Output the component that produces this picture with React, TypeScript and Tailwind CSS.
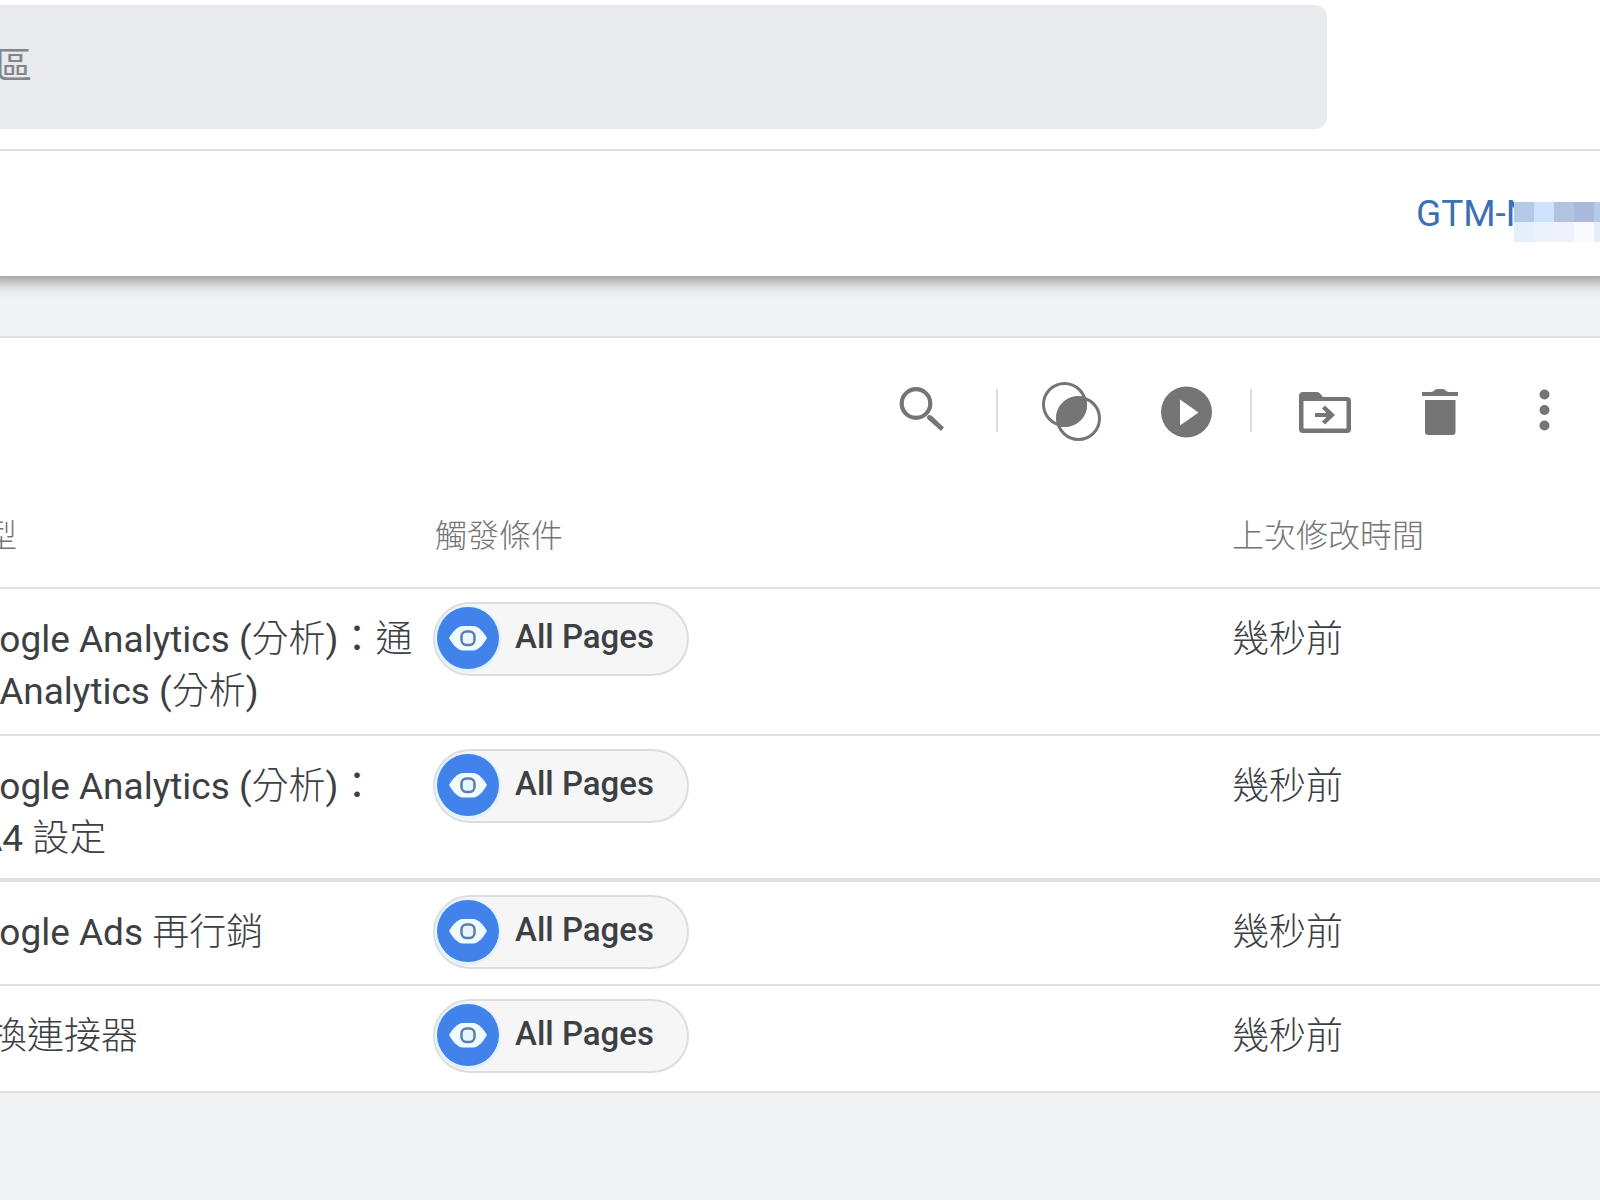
import type { ReactNode } from 'react';

import { clsx } from 'clsx';

type TagRow = {
  type: string;
  trigger: string;
  modified: string;
  height: string;
  border: string;
};

const rows: TagRow[] = [
  {
    type: 'Google Analytics (分析)：通用 Analytics (分析)',
    trigger: 'All Pages',
    modified: '幾秒前',
    height: 'h-[147px]',
    border: 'border-b-2',
  },
  {
    type: 'Google Analytics (分析)：GA4 設定',
    trigger: 'All Pages',
    modified: '幾秒前',
    height: 'h-[146px]',
    border: 'border-b-4',
  },
  { type: 'Google Ads 再行銷', trigger: 'All Pages', modified: '幾秒前', height: 'h-[104px]', border: 'border-b-2' },
  { type: '轉換連接器', trigger: 'All Pages', modified: '幾秒前', height: 'h-[107px]', border: 'border-b-2' },
];

export default function App() {
  return (
    <div className="min-h-screen overflow-hidden bg-[#f0f2f4] font-['Roboto','Noto_Sans_CJK_TC',sans-serif] text-[#3c4043]">
      <Header />
      <TagsCard />
    </div>
  );
}

const Header = () => {
  return (
    <header className="bg-white shadow-[0_-12px_16px_16px_rgba(0,0,0,0.45)]">
      <div className="border-b-2 border-[#e0e0e0] pt-[5px] pr-[273px] pb-5">
        <input
          type="text"
          aria-label="搜尋工作區"
          placeholder="搜尋工作區"
          className="-ml-[153px] block h-[124px] w-[calc(100%+153px)] rounded-xl bg-[#e8eaed] pb-0.5 text-[37px] outline-0 placeholder:text-[#80868b]"
        />
      </div>
      <div className="flex h-[125px] items-center justify-end">
        <a href="#container" className="relative w-[184px] text-[37px] leading-[52px] text-[#3b70b5]">
          GTM-N
          <MaskedId />
        </a>
      </div>
    </header>
  );
};

const MaskedId = () => {
  return (
    <span className="absolute top-1.5 left-[98px] grid w-[100px] grid-cols-5 bg-white pt-2">
      <span className="h-5 bg-[#b3cae9]" />
      <span className="h-5 bg-[#cfe2fb]" />
      <span className="h-5 bg-[#b2c3e0]" />
      <span className="h-5 bg-[#a9b9dc]" />
      <span className="h-5 bg-[#b5cbe8]" />
      <span className="h-5 bg-[#e4effb]" />
      <span className="h-5 bg-[#ecf2fb]" />
      <span className="h-5 bg-[#eff2fa]" />
      <span className="h-5 bg-[#f9fafe]" />
      <span className="h-5 bg-[#e6eefa]" />
    </span>
  );
};

const TagsCard = () => {
  return (
    <main className="mt-[60px] border-t-2 border-[#e0e0e0] bg-white">
      <Toolbar />
      <div className="-ml-[47px]">
        <table className="w-full table-fixed border-separate border-spacing-0 text-left">
          <colgroup>
            <col className="w-[482px]" />
            <col />
            <col className="w-[368px]" />
          </colgroup>
          <thead>
            <tr className="h-[149px] text-[32px] leading-10 text-[#757575]">
              <HeadCell>類型</HeadCell>
              <HeadCell>觸發條件</HeadCell>
              <HeadCell>上次修改時間</HeadCell>
            </tr>
          </thead>
          <tbody>
            {rows.map((row) => (
              <tr key={row.type} className={clsx('align-top text-[37px] leading-[52px]', row.height)}>
                <td className={clsx('border-[#e0e0e0] pt-[25px]', row.border)}>
                  <MixedText text={row.type} />
                </td>
                <td className={clsx('border-[#e0e0e0] pt-[13px]', row.border)}>
                  <TriggerChip name={row.trigger} />
                </td>
                <td className={clsx('border-[#e0e0e0] pt-[25px] font-light', row.border)}>{row.modified}</td>
              </tr>
            ))}
          </tbody>
        </table>
      </div>
    </main>
  );
};

// Chinese runs are set in the light weight, Latin runs in the regular one
const MixedText = ({ text }: { text: string }) => {
  return text.split(/([\u4e00-\u9fff]+)/).map((part, index) => (
    <span key={index} className={index % 2 ? 'font-light' : undefined}>
      {part}
    </span>
  ));
};

const HeadCell = ({ children }: { children: ReactNode }) => {
  return <th className="border-b-2 border-[#e0e0e0] pb-[31px] align-bottom font-light">{children}</th>;
};

const TriggerChip = ({ name }: { name: string }) => {
  return (
    <button className="-ml-0.5 flex h-[74px] w-[256px] items-center gap-3.5 rounded-full border-2 border-[#dcdddf] bg-[#f6f6f7]">
      <svg viewBox="0 0 66 66" className="size-[66px] shrink-0 overflow-visible">
        <circle cx="33" cy="33" r="33.500" fill="#e3f3fe" />
        <circle cx="33" cy="32" r="31" fill="#4182eb" />
        <path d="M14 32C17 27 22 20 28 20H38C44 20 49 27 52 32C49 37 44 44.500 38 44.500H28C22 44.500 17 37 14 32Z" fill="#effbff" />
        <rect x="26.500" y="25.500" width="13" height="13.500" rx="5" fill="#e8f6ff" stroke="#5c7fa6" strokeWidth="2.500" />
      </svg>
      <span className="pb-1 text-[33px] leading-10 font-medium">{name}</span>
    </button>
  );
};

const ToolButton = ({ label, className, children }: { label: string; className?: string; children: ReactNode }) => {
  return (
    <button aria-label={label} className={className}>
      <svg viewBox="0 0 60 60" className="size-[60px] overflow-visible" fill="#757575">
        {children}
      </svg>
    </button>
  );
};

const Toolbar = () => {
  return (
    <div className="flex items-center justify-end pt-[42px] pr-[26px]">
      <ToolButton label="搜尋">
        <circle cx="24" cy="23.500" r="14.300" fill="none" stroke="#757575" strokeWidth="4.200" />
        <path d="M34.500 37.500l2-2.500 3 .5 12.500 12-3 3.500L36 39.500z" />
      </ToolButton>
      <span className="mx-11 h-[43px] w-0.5 bg-[#dedede]" />
      <ToolButton label="比較">
        <circle cx="22.500" cy="24.500" r="21" fill="none" stroke="#757575" strokeWidth="3" />
        <circle cx="36.500" cy="38.500" r="21" fill="none" stroke="#757575" strokeWidth="3" />
        <path d="M44 17.700A22 22 0 0 1 15.300 45.300A22 22 0 0 1 44 17.700Z" />
      </ToolButton>
      <ToolButton label="啟用" className="ml-[55px]">
        <path fillRule="evenodd" d="M29.500 6.500a25.500 25.500 0 1 1 0 51a25.500 25.500 0 1 1 0-51ZM23 19.500v26L41.500 32.500Z" />
      </ToolButton>
      <span className="mr-[43px] ml-[33px] h-[43px] w-0.5 bg-[#dedede]" />
      <ToolButton label="移至資料夾">
        <path
          fillRule="evenodd"
          d="M8 12h14q2 0 3.500 2l2.500 3h24q4 0 4 4v28q0 4-4 4H8q-4 0-4-4V16q0-4 4-4ZM8.500 21v27.500h43V21Z"
        />
        <path d="M20 33h11.500l-4.500-4.500 3-3L40 35 30 44.500 27 41.500l4.500-4.500H20Z" />
      </ToolButton>
      <ToolButton label="刪除" className="ml-[55px]">
        <path d="M12 12h9q2 0 4-2 1-1 3-1h4q2 0 3 1 2 2 4 2h9v4H12ZM15 20h30.500v32q0 3-3 3H18q-3 0-3-3Z" />
      </ToolButton>
      <ToolButton label="更多" className="ml-11">
        <circle cx="30.500" cy="14.500" r="5" />
        <circle cx="30.500" cy="30" r="5" />
        <circle cx="30.500" cy="45.500" r="5" />
      </ToolButton>
    </div>
  );
};
